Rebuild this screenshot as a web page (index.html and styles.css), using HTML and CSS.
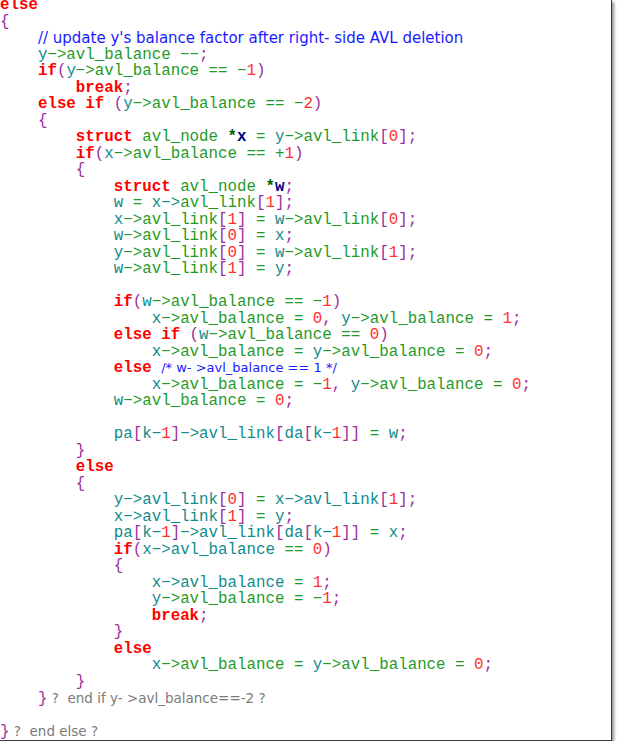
FILE: index.html
```html
<!DOCTYPE html>
<html>
<head>
<meta charset="utf-8">
<link rel="stylesheet" href="styles.css">
</head>
<body>
<div class="shot">
<div class="code">
<div class="ln"><span class="k">else</span></div>
<div class="ln"><span class="p">{</span></div>
<div class="ln">    <span class="cl">// update y's balance factor after right- side AVL deletion</span></div>
<div class="ln">    <span class="v">y</span>−&gt;avl_balance −−<span class="p">;</span></div>
<div class="ln">    <span class="k">if</span><span class="p">(</span><span class="v">y</span>−&gt;avl_balance == −<span class="n">1</span><span class="p">)</span></div>
<div class="ln">        <span class="k">break</span><span class="p">;</span></div>
<div class="ln">    <span class="k">else if</span> <span class="p">(</span><span class="v">y</span>−&gt;avl_balance == −<span class="n">2</span><span class="p">)</span></div>
<div class="ln">    <span class="p">{</span></div>
<div class="ln">        <span class="k">struct</span> avl_node <span class="s">*<span class="sx">x</span></span> = <span class="v">y</span>−&gt;avl_link<span class="p">[</span><span class="n">0</span><span class="p">];</span></div>
<div class="ln">        <span class="k">if</span><span class="p">(</span><span class="v">x</span>−&gt;avl_balance == +<span class="n">1</span><span class="p">)</span></div>
<div class="ln">        <span class="p">{</span></div>
<div class="ln">            <span class="k">struct</span> avl_node <span class="s">*<span class="sx">w</span></span><span class="p">;</span></div>
<div class="ln">            <span class="v">w</span> = <span class="v">x−&gt;</span>avl_link<span class="p">[</span><span class="n">1</span><span class="p">];</span></div>
<div class="ln">            <span class="v">x</span>−&gt;avl_link<span class="p">[</span><span class="n">1</span><span class="p">]</span> = <span class="v">w</span>−&gt;avl_link<span class="p">[</span><span class="n">0</span><span class="p">];</span></div>
<div class="ln">            <span class="v">w</span>−&gt;avl_link<span class="p">[</span><span class="n">0</span><span class="p">]</span> = <span class="v">x</span><span class="p">;</span></div>
<div class="ln">            <span class="v">y</span>−&gt;avl_link<span class="p">[</span><span class="n">0</span><span class="p">]</span> = <span class="v">w</span>−&gt;avl_link<span class="p">[</span><span class="n">1</span><span class="p">];</span></div>
<div class="ln">            <span class="v">w</span>−&gt;avl_link<span class="p">[</span><span class="n">1</span><span class="p">]</span> = <span class="v">y</span><span class="p">;</span></div>
<div class="ln"> </div>
<div class="ln">            <span class="k">if</span><span class="p">(</span><span class="v">w</span>−&gt;avl_balance == −<span class="n">1</span><span class="p">)</span></div>
<div class="ln">                <span class="v">x</span>−&gt;avl_balance = <span class="n">0</span><span class="p">,</span> <span class="v">y</span>−&gt;avl_balance = <span class="n">1</span><span class="p">;</span></div>
<div class="ln">            <span class="k">else if</span> <span class="p">(</span><span class="v">w</span>−&gt;avl_balance == <span class="n">0</span><span class="p">)</span></div>
<div class="ln">                <span class="v">x</span>−&gt;avl_balance = <span class="v">y</span>−&gt;avl_balance = <span class="n">0</span><span class="p">;</span></div>
<div class="ln">            <span class="k">else</span> <span class="c">/* w- &gt;avl_balance == 1 */</span></div>
<div class="ln">                <span class="v">x</span>−&gt;avl_balance = −<span class="n">1</span><span class="p">,</span> <span class="v">y</span>−&gt;avl_balance = <span class="n">0</span><span class="p">;</span></div>
<div class="ln">            <span class="v">w</span>−&gt;avl_balance = <span class="n">0</span><span class="p">;</span></div>
<div class="ln"> </div>
<div class="ln">            <span class="v">pa</span><span class="p">[</span><span class="v">k−</span><span class="n">1</span><span class="p">]</span><span class="v">−&gt;avl_link</span><span class="p">[</span><span class="v">da</span><span class="p">[</span><span class="v">k−</span><span class="n">1</span><span class="p">]]</span> = <span class="v">w</span><span class="p">;</span></div>
<div class="ln">        <span class="p">}</span></div>
<div class="ln">        <span class="k">else</span></div>
<div class="ln">        <span class="p">{</span></div>
<div class="ln">            <span class="v">y−&gt;avl_link</span><span class="p">[</span><span class="n">0</span><span class="p">]</span> = <span class="v">x−&gt;avl_link</span><span class="p">[</span><span class="n">1</span><span class="p">];</span></div>
<div class="ln">            <span class="v">x−&gt;avl_link</span><span class="p">[</span><span class="n">1</span><span class="p">]</span> = <span class="v">y</span><span class="p">;</span></div>
<div class="ln">            <span class="v">pa</span><span class="p">[</span><span class="v">k−</span><span class="n">1</span><span class="p">]</span><span class="v">−&gt;avl_link</span><span class="p">[</span><span class="v">da</span><span class="p">[</span><span class="v">k−</span><span class="n">1</span><span class="p">]]</span> = <span class="v">x</span><span class="p">;</span></div>
<div class="ln">            <span class="k">if</span><span class="p">(</span><span class="v">x−&gt;avl_balance</span> == <span class="n">0</span><span class="p">)</span></div>
<div class="ln">            <span class="p">{</span></div>
<div class="ln">                <span class="v">x−&gt;avl_balance</span> = <span class="n">1</span><span class="p">;</span></div>
<div class="ln">                <span class="v">y</span>−&gt;avl_balance = −<span class="n">1</span><span class="p">;</span></div>
<div class="ln">                <span class="k">break</span><span class="p">;</span></div>
<div class="ln">            <span class="p">}</span></div>
<div class="ln">            <span class="k">else</span></div>
<div class="ln">                <span class="v">x</span>−&gt;avl_balance = <span class="v">y</span>−&gt;avl_balance = <span class="n">0</span><span class="p">;</span></div>
<div class="ln">        <span class="p">}</span></div>
<div class="ln">    <span class="p">}</span><span class="g"> ?  end if y- &gt;avl_balance==-2 ?</span></div>
<div class="ln"> </div>
<div class="ln"><span class="p">}</span><span class="g"> ?  end else ?</span></div>
</div>
</div>
</body>
</html>
```

FILE: styles.css
```css
html, body {
  margin: 0;
  padding: 0;
  background: #ffffff;
}

.shot {
  width: 611px;
  height: 740px;
  background: #ffffff;
  border-right: 1px solid #3a3a3a;
  border-bottom: 1px solid #3a3a3a;
  box-shadow: 2px 2px 3px rgba(0, 0, 0, 0.45);
  overflow: hidden;
}

.code {
  margin-top: -3px;
  font-family: "Liberation Mono", "Courier New", monospace;
  font-size: 15.8px;
  color: #1f9a28;
}

.ln {
  height: 16.5px;
  line-height: 16.5px;
  white-space: pre;
}

.k {
  color: #ff0000;
  font-weight: bold;
}

.v {
  color: #108c8c;
}

.p {
  color: #9a2fa0;
}

.n {
  color: #ff3030;
}

.s {
  color: #006000;
  font-weight: bold;
}

.sx {
  color: #000080;
}

.cl {
  font-family: "DejaVu Sans", Verdana, sans-serif;
  font-size: 15px;
  color: #1a1aff;
}

.c {
  font-family: "DejaVu Sans", Verdana, sans-serif;
  font-size: 13px;
  color: #1a1aff;
}

.g {
  font-family: "DejaVu Sans", Verdana, sans-serif;
  font-size: 13.5px;
  color: #7a7a7a;
}
```
